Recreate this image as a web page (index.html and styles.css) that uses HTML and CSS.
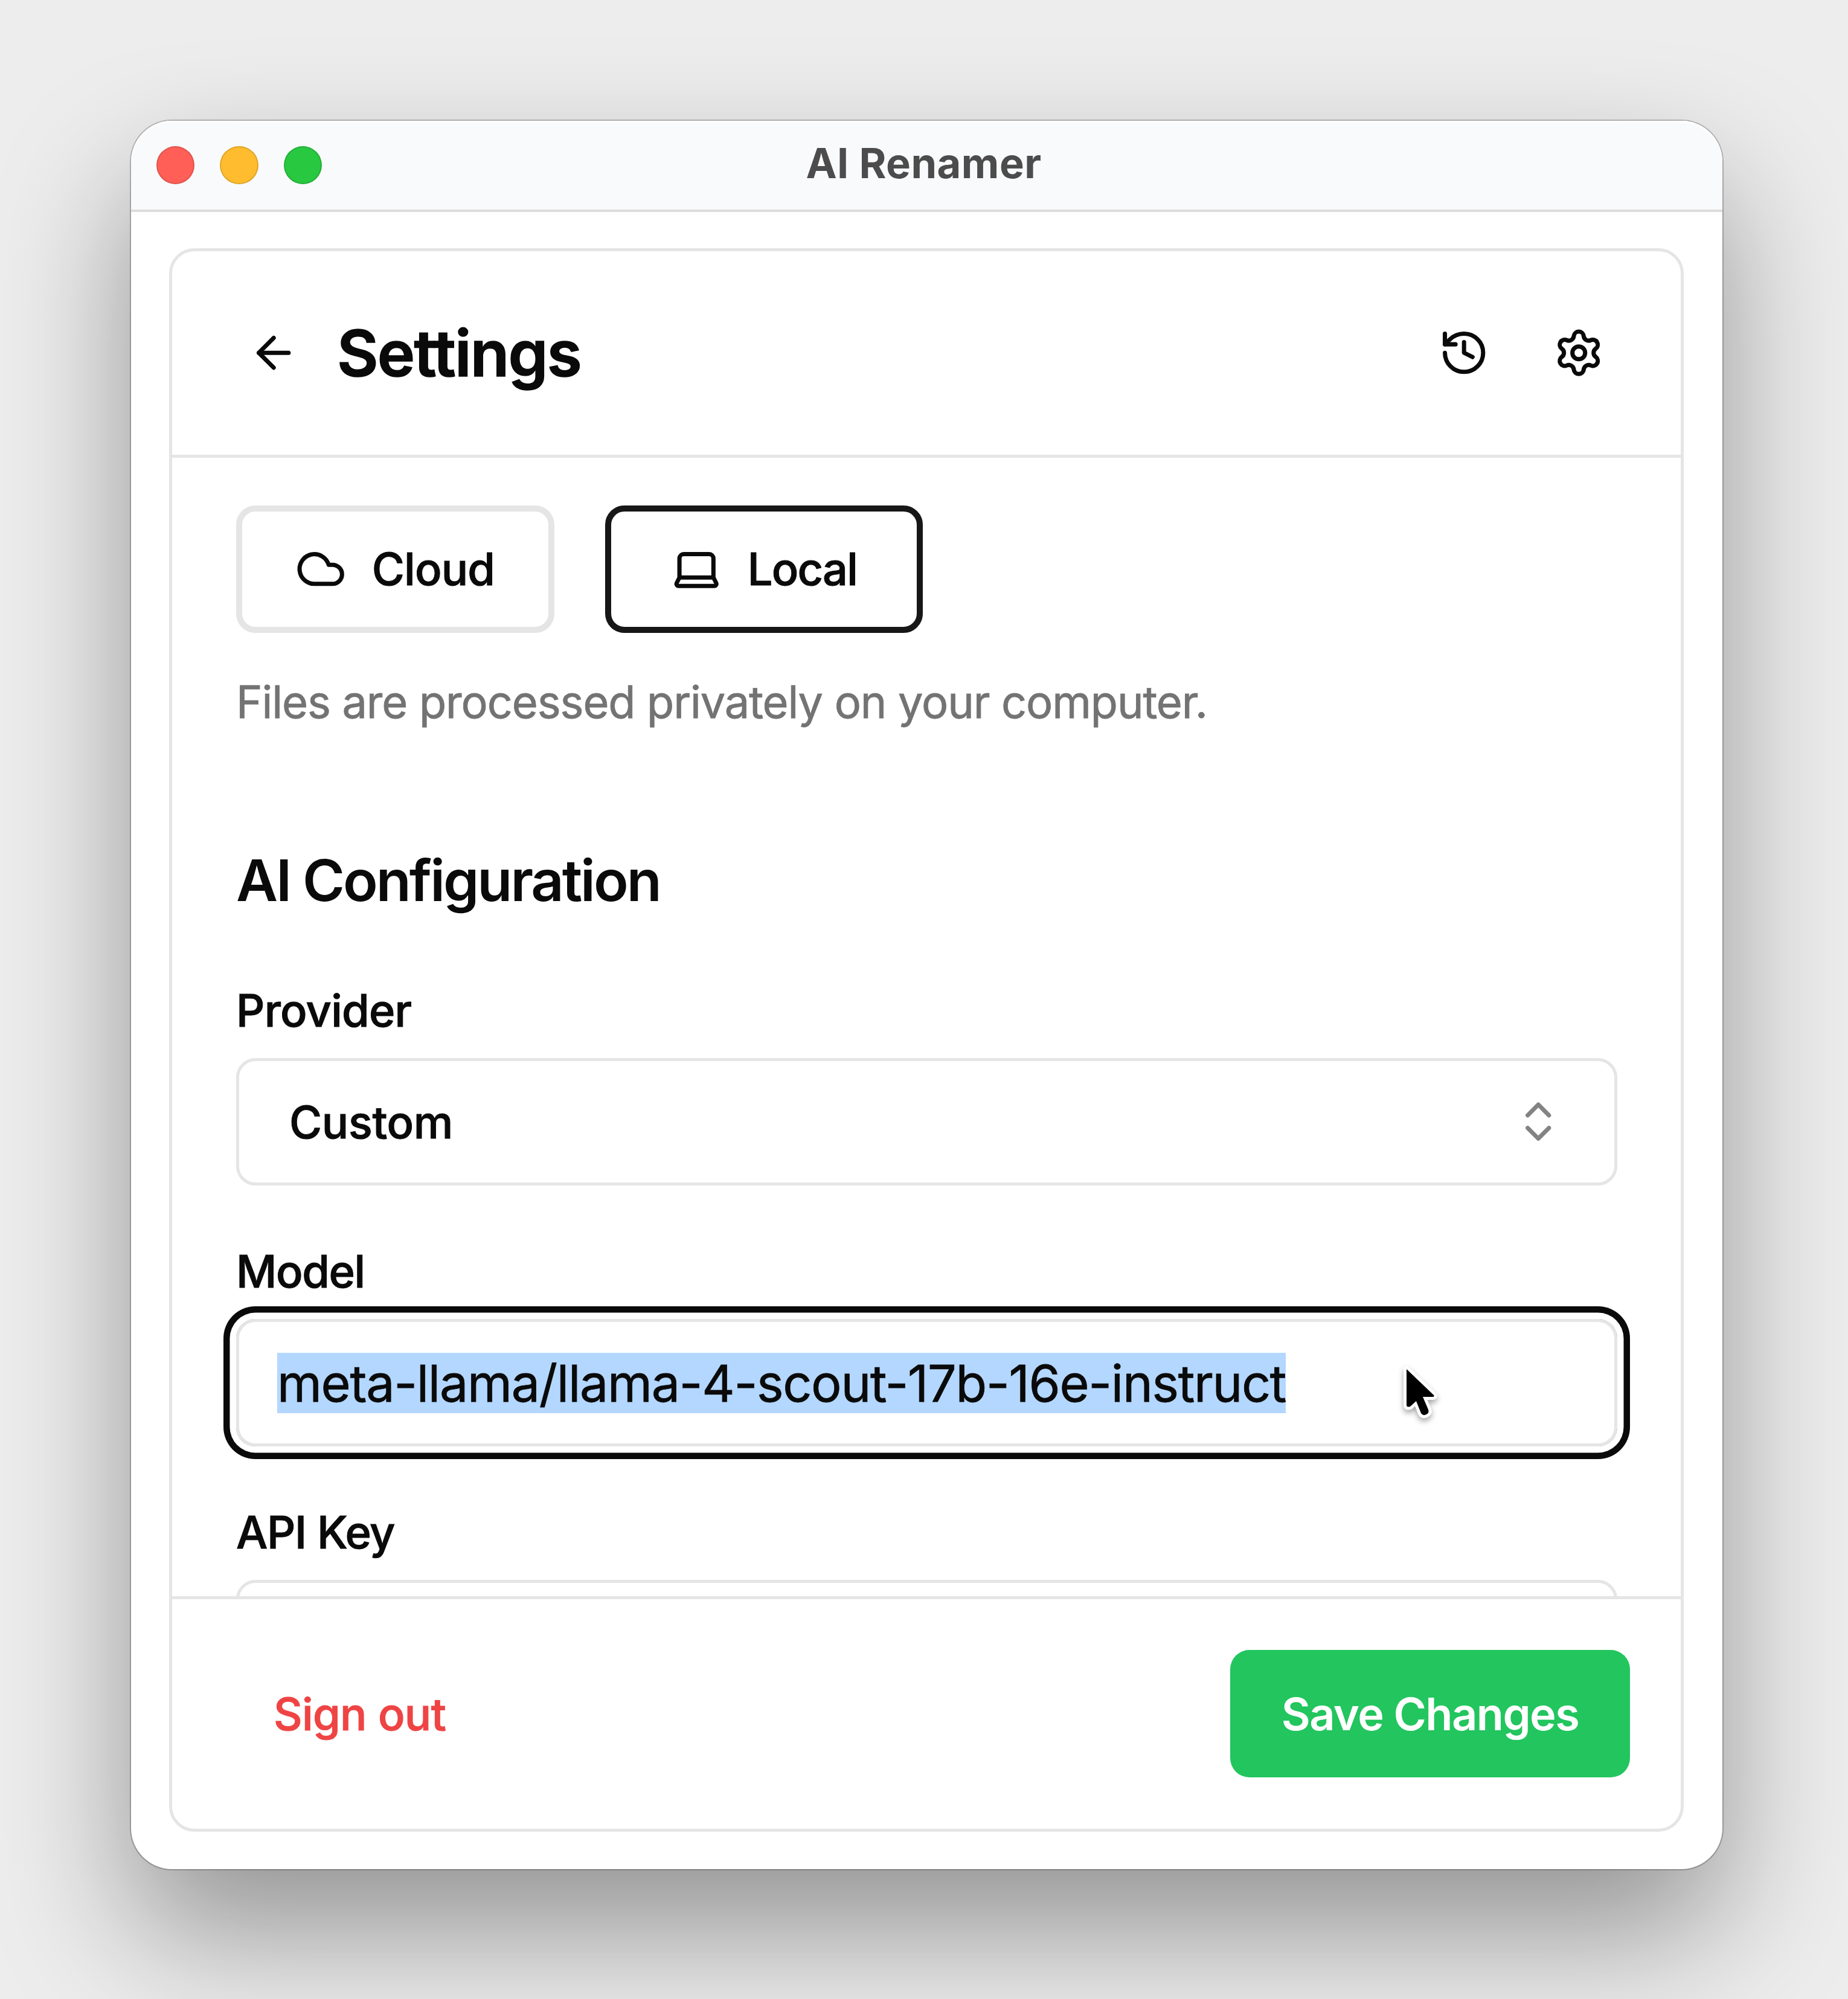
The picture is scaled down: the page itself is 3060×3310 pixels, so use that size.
FILE: index.html
```html
<!DOCTYPE html>
<html lang="en">
<head>
    <meta charset="UTF-8">
    <meta name="viewport" content="width=device-width, initial-scale=1.0">
    <title>AI Renamer</title>
    <link rel="stylesheet" href="styles.css">
</head>
<body>
    <div class="window">
        <div class="titlebar">
            <div class="lights">
                <span class="light red"></span>
                <span class="light yellow"></span>
                <span class="light green"></span>
            </div>
            <span class="title">AI Renamer</span>
        </div>
        <div class="card">
            <div class="header">
                <button class="icon-btn" aria-label="Back">
                    <svg class="icon" viewBox="0 0 24 24"><path d="m12 19-7-7 7-7"/><path d="M19 12H5"/></svg>
                </button>
                <h1>Settings</h1>
                <button class="icon-btn" aria-label="History">
                    <svg class="icon" viewBox="0 0 24 24"><path d="M3 12a9 9 0 1 0 9-9 9.75 9.75 0 0 0-6.74 2.74L3 8"/><path d="M3 3v5h5"/><path d="M12 7v5l4 2"/></svg>
                </button>
                <button class="icon-btn" aria-label="Settings">
                    <svg class="icon" viewBox="0 0 24 24"><path d="M9.671 4.136a2.34 2.34 0 0 1 4.659 0 2.34 2.34 0 0 0 3.319 1.915 2.34 2.34 0 0 1 2.33 4.033 2.34 2.34 0 0 0 0 3.831 2.34 2.34 0 0 1-2.33 4.033 2.34 2.34 0 0 0-3.319 1.915 2.34 2.34 0 0 1-4.659 0 2.34 2.34 0 0 0-3.32-1.915 2.34 2.34 0 0 1-2.33-4.033 2.34 2.34 0 0 0 0-3.831A2.34 2.34 0 0 1 6.35 6.051a2.34 2.34 0 0 0 3.319-1.915"/><circle cx="12" cy="12" r="3"/></svg>
                </button>
            </div>

            <div class="content">
                <div class="modes">
                    <button class="mode">
                        <svg class="icon" viewBox="0 0 24 24"><path d="M17.5 19H9a7 7 0 1 1 6.71-9h1.79a4.5 4.5 0 1 1 0 9Z"/></svg>
                        <span class="cloud-text">Cloud</span>
                    </button>
                    <button class="mode active">
                        <svg class="icon" viewBox="0 0 24 24"><path d="M20 16V7a2 2 0 0 0-2-2H6a2 2 0 0 0-2 2v9m16 0H4m16 0 1.28 2.55a1 1 0 0 1-.9 1.45H3.62a1 1 0 0 1-.9-1.45L4 16"/></svg>
                        <span class="local-text">Local</span>
                    </button>
                </div>
                <p class="hint">Files are processed privately on your computer.</p>

                <h2>AI Configuration</h2>

                <div class="group">
                    <div class="label provider-label">Provider</div>
                    <div class="field select">
                        <span>Custom</span>
                        <svg class="icon" viewBox="0 0 24 24"><path d="m7 15 5 5 5-5"/><path d="m7 9 5-5 5 5"/></svg>
                    </div>
                </div>
                <div class="group">
                    <div class="label">Model</div>
                    <div class="field focused">
                        <span class="selected">meta-llama/llama-4-scout-17b-16e-instruct</span>
                        <svg class="cursor" viewBox="0 0 60 90"><path d="M8 8L53 51Q55 54 51 54H35L44 75Q46 80 41 83Q35 86 32 81L24 61L14 70Q8 72 8 67Z"/></svg>
                    </div>
                </div>
                <div class="group">
                    <div class="label">API Key</div>
                    <div class="field"></div>
                </div>
            </div>

            <div class="footer">
                <button class="signout">Sign out</button>
                <button class="save">Save Changes</button>
            </div>
        </div>
    </div>
</body>
</html>
```
FILE: styles.css
```css
* {
    box-sizing: border-box;
}
body {
    margin: 0;
    padding: 199.5px 0 0 216.5px;
    width: 3060px;
    height: 3310px;
    overflow: hidden;
    background: #ededed;
    font-family: Inter, "Liberation Sans", sans-serif;
    color: #0a0a0a;
}
button {
    font: inherit;
    color: inherit;
    letter-spacing: inherit;
    background: none;
    border: none;
    margin: 0;
    padding: 0;
}
.window {
    width: 2635px;
    height: 2895.5px;
    border-radius: 68px;
    background: #fff;
    box-shadow: 0 0 0 2px rgba(0, 0, 0, 0.22), 0 105px 220px rgba(0, 0, 0, 0.38);
}
.titlebar {
    position: relative;
    height: 151px;
    display: flex;
    align-items: center;
    justify-content: center;
    padding: 0 9px 6px 0;
    background: #f9fafc;
    border-bottom: 4px solid #dcdcdc;
    border-radius: 68px 68px 0 0;
    box-shadow: inset 0 3px 1px #fff;
}
.lights {
    position: absolute;
    left: 42px;
    top: 42px;
    display: flex;
    gap: 42px;
}
.light {
    width: 63.5px;
    height: 63.5px;
    border-radius: 50%;
    border: 2px solid rgba(0, 0, 0, 0.12);
}
.red {
    background: #ff5f57;
}
.yellow {
    background: #febc2e;
}
.green {
    background: #28c840;
}
.title {
    font-size: 68.6px;
    font-weight: 700;
    letter-spacing: 0.45px;
    color: #4c4c4c;
}
.card {
    margin: 60px 0 0 63.5px;
    width: 2507.5px;
    height: 2622px;
    border: 5px solid #e5e5e5;
    border-radius: 42px;
    display: flex;
    flex-direction: column;
}
.icon {
    width: 84.4px;
    height: 84.4px;
    fill: none;
    stroke: currentColor;
    stroke-width: 2;
    stroke-linecap: round;
    stroke-linejoin: round;
    flex: none;
}
.header {
    height: 342px;
    flex: none;
    display: flex;
    align-items: center;
    padding: 0 73px;
    border-bottom: 5px solid #e5e5e5;
}
.icon-btn {
    width: 190px;
    height: 190px;
    display: flex;
    align-items: center;
    justify-content: center;
}
h1 {
    flex: 1;
    margin: 0 0 0 10px;
    font-size: 105.5px;
    font-weight: 600;
    letter-spacing: -1.8px;
    -webkit-text-stroke: 1.5px currentColor;
}
.content {
    flex: 1;
    min-height: 0;
    overflow: hidden;
    padding: 79px 105px 0 106px;
}
.modes {
    display: flex;
    gap: 84.4px;
}
.mode {
    width: 526.5px;
    height: 211px;
    display: flex;
    align-items: center;
    justify-content: center;
    gap: 42px;
    border: 10.5px solid #e5e5e5;
    border-radius: 32px;
    font-size: 73.85px;
    font-weight: 500;
    -webkit-text-stroke: 1px currentColor;
}
.mode.active {
    border-color: #171717;
}
.cloud-text {
    letter-spacing: -0.8px;
}
.local-text {
    letter-spacing: -1.8px;
}
.hint {
    margin: 62px 0 0;
    font-size: 73.85px;
    line-height: 105.5px;
    letter-spacing: -1.11px;
    -webkit-text-stroke: 0.8px currentColor;
    color: #737373;
    white-space: nowrap;
}
h2 {
    margin: 168.5px 0 104.5px;
    font-size: 94.95px;
    line-height: 148px;
    font-weight: 600;
    letter-spacing: -3.05px;
}
.group {
    margin-bottom: 105px;
}
.label {
    margin-bottom: 42px;
    font-size: 73.85px;
    line-height: 74px;
    font-weight: 500;
    letter-spacing: -1.4px;
    -webkit-text-stroke: 1px currentColor;
}
.provider-label {
    letter-spacing: -0.75px;
}
.field {
    position: relative;
    height: 211px;
    display: flex;
    align-items: center;
    border: 5px solid #e5e5e5;
    border-radius: 32px;
}
.select {
    justify-content: space-between;
    padding: 0 83px;
    font-size: 73.85px;
    font-weight: 500;
    letter-spacing: -0.3px;
    -webkit-text-stroke: 1px currentColor;
}
.select .icon {
    opacity: 0.5;
}
.focused {
    padding: 0 63px;
    box-shadow: 0 0 0 10.5px #fff, 0 0 0 21px #0a0a0a;
}
.selected {
    font-size: 84.4px;
    line-height: 100px;
    letter-spacing: -1.32px;
    -webkit-text-stroke: 0.8px currentColor;
    background: #b3d7ff;
    white-space: nowrap;
}
/* mouse pointer resting over the field */
.cursor {
    position: absolute;
    left: 1925px;
    top: 70px;
    width: 60px;
    height: 90px;
    overflow: visible;
    fill: #000;
    stroke: #fff;
    stroke-width: 10;
    stroke-linejoin: round;
    paint-order: stroke;
    filter: drop-shadow(0 5px 5px rgba(0, 0, 0, 0.35));
}
.footer {
    height: 385px;
    flex: none;
    display: flex;
    align-items: center;
    justify-content: space-between;
    padding: 0 83.5px 0 168px;
    border-top: 5px solid #e5e5e5;
    font-size: 73.85px;
    font-weight: 500;
    letter-spacing: -0.65px;
}
.signout {
    color: #ef4444;
    -webkit-text-stroke: 1px currentColor;
}
.save {
    width: 662px;
    height: 211px;
    border-radius: 32px;
    background: #22c55e;
    color: #fff;
    font-weight: 600;
    letter-spacing: -1.55px;
}
```
